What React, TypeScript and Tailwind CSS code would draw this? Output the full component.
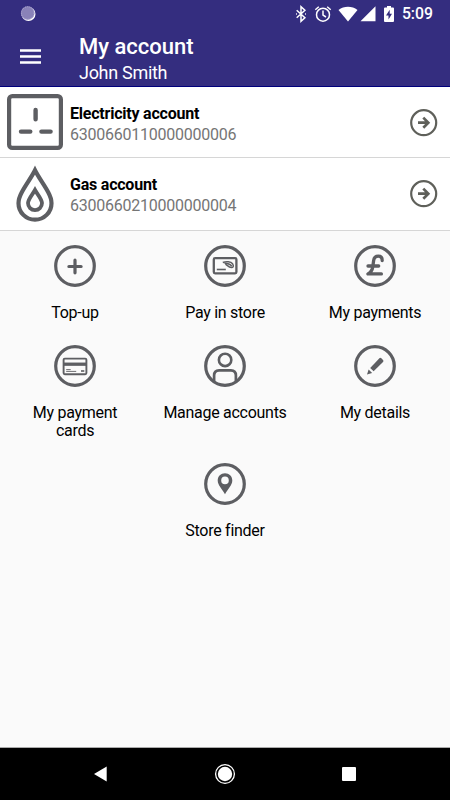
import type { ReactNode } from "react";

type Account = {
  name: string;
  number: string;
  icon: ReactNode;
};

type MenuItem = {
  label: string;
  icon: ReactNode;
};

function SocketIcon() {
  return (
    <svg viewBox="0 0 56 56" className="h-14 w-14" fill="none" stroke="currentColor">
      <rect x="2.1" y="2.1" width="51.8" height="51.8" rx="3.2" strokeWidth="4.2" />
      <path d="M28.6 16v9.2M14 37.6h9.3M34.4 37.6h9.2" strokeWidth="4.4" strokeLinecap="round" />
    </svg>
  );
}

function FlameIcon() {
  return (
    <svg viewBox="0 -0.8 56 56" className="h-14 w-14 overflow-visible" fill="none" stroke="currentColor" strokeWidth="4.2">
      <path d="M28 4.5C24.500 11.500 18.500 19.500 14.800 26.500 12.500 30.800 11.500 34 11.500 37.400a16.500 16.500 0 0 0 33 0C44.500 34 43.500 30.800 41.200 26.500 37.500 19.500 31.500 11.500 28 4.500Z" />
      <path d="M28 24.200C26 28 21 33.500 21 37.300a7 7 0 0 0 14 0C35 33.500 30 28 28 24.200Z" strokeWidth="3.8" />
    </svg>
  );
}

function ArrowIcon() {
  return (
    <svg viewBox="0 0 28 28" className="mt-[15px] h-7 w-7 text-[#5f605a]" fill="none" stroke="currentColor">
      <circle cx="13.7" cy="13.7" r="12.5" strokeWidth="2.2" />
      <path d="M8 13.700h10M13.300 8.600l5 5.100-5 5.100" strokeWidth="2.7" />
    </svg>
  );
}

// Shared ring used by every menu entry
function Ring({ children }: { children: ReactNode }) {
  return (
    <svg viewBox="0 0 42 42" className="h-[42px] w-[42px] text-[#5d5e62]" fill="none" stroke="currentColor">
      <circle cx="21" cy="21" r="19.3" strokeWidth="3.2" />
      {children}
    </svg>
  );
}

const accounts: Account[] = [
  { name: "Electricity account", number: "6300660110000000006", icon: <SocketIcon /> },
  { name: "Gas account", number: "6300660210000000004", icon: <FlameIcon /> },
];

const menuItems: MenuItem[] = [
  {
    label: "Top-up",
    icon: <path d="M21 15.200v12.600M14.900 21.500h12.200" strokeWidth="3.2" strokeLinecap="round" />,
  },
  {
    label: "Pay in store",
    icon: (
      <>
        <rect x="9.8" y="13.2" width="22.6" height="15.2" rx="1.3" strokeWidth="2.3" />
        <path d="M12.800 24.500h9" strokeWidth="1.6" />
        <path d="M18.800 17.500c3.500-1.500 8-1 9.800 1.300 1.300 2 .8 3.700-1.200 3.700-2.700-.2-4.300-2.500-6-3.400" strokeWidth="1.5" />
        <path d="M20.500 18.300c3 0 5.500.7 7.300 3" strokeWidth="1.6" />
      </>
    ),
  },
  {
    label: "My payments",
    icon: (
      <path
        d="M28.200 15.500c0-2.700-1.500-4.300-3.900-4.300-2.700 0-4.300 1.600-4.700 4.500l-.8 6c-.5 3.500-1.700 5.600-4.900 7.200h13.500M14 21h10.700"
        strokeWidth="3.3"
        strokeLinecap="round"
        strokeLinejoin="round"
      />
    ),
  },
  {
    label: "My payment cards",
    icon: (
      <>
        <rect x="9.6" y="13.6" width="22.8" height="15.6" rx="1.2" strokeWidth="1.9" />
        <path d="M9 19.200h24" strokeWidth="3.3" />
        <path d="M12.200 24.600h4.500M12.200 26.400h10" strokeWidth="0.9" />
        <path d="M27 26h3.300" strokeWidth="1.6" />
      </>
    ),
  },
  {
    label: "Manage accounts",
    icon: (
      <>
        <circle cx="21.1" cy="14.9" r="6.2" strokeWidth="2.6" />
        <path d="M10.100 37v-6.500c0-3.300 2-5.200 5-5.200h11.800c3 0 5 1.900 5 5.200V37" strokeWidth="2.7" />
      </>
    ),
  },
  {
    label: "My details",
    icon: (
      <g fill="currentColor" stroke="none">
        <path d="m16.200 23 9.200-9.700q1-1 2 0l1.600 1.600q1 1 0 2L19.600 26.200Z" />
        <path d="m14.600 24.500 3.500 3.400-5.100 1.600Z" />
      </g>
    ),
  },
  {
    label: "Store finder",
    icon: (
      <path
        d="M21 10.300c-4.100 0-7.300 3.100-7.300 7.100 0 4.600 4.300 8.100 7.300 13.900 3-5.800 7.300-9.300 7.300-13.900 0-4-3.200-7.100-7.300-7.100Zm0 3.300a3.800 3.800 0 1 1 0 7.600 3.800 3.800 0 0 1 0-7.600Z"
        fill="currentColor"
        fillRule="evenodd"
        stroke="none"
      />
    ),
  },
];

function StatusBar() {
  return (
    <div className="flex h-[27px] items-center justify-between pr-[17px] pl-5 text-white">
      <svg viewBox="0 0 16 16" className="h-4 w-4">
        <circle cx="8.5" cy="8" r="7" fill="#fff" />
        <circle cx="7.7" cy="7" r="6.8" fill="#8982b8" />
        <circle cx="7.7" cy="7" r="6.3" fill="none" stroke="#b6b0d6" strokeDasharray="1 1" />
      </svg>
      <div className="flex items-center">
        <svg viewBox="0 0 12 18" className="h-[18px] w-3" fill="none" stroke="currentColor" strokeWidth="1.5">
          <path d="m1.700 5.300 8.200 7.400L6 16.300V1.700l3.900 3.600-8.200 7.400M1 9h.9M10.100 9h.9" />
        </svg>
        <svg viewBox="0 0 18 18" className="ml-[7px] h-[18px] w-[18px]" fill="none" stroke="currentColor" strokeWidth="1.5">
          <circle cx="9" cy="9.7" r="6.5" />
          <path d="M9 5.500v4.600l3 1.900M1.300 4.800l3.500-3M16.700 4.800l-3.500-3" />
        </svg>
        <svg viewBox="0 0 20 16" className="ml-1.5 h-4 w-5" fill="currentColor">
          <path d="M.5 4C6-.2 14-.2 19.500 4L10 15.500Z" />
        </svg>
        <svg viewBox="0 0 16 16" className="ml-0.5 h-4 w-4" fill="currentColor">
          <path d="M15.500.300v15H.5Z" />
        </svg>
        <svg viewBox="0 0 10 16" className="ml-2 h-4 w-2.5" fill="currentColor">
          <path d="M3 0h4v1.500h2q1 0 1 1V15q0 1-1 1H1q-1 0-1-1V2.500q0-1 1-1h2Z" />
          <path d="M5.700 3.700 2 9.500h2.500v4L8 7.700H5.700Z" fill="#342d7f" />
        </svg>
        <span className="ml-2 text-[15.8px] leading-5 font-medium">5:09</span>
      </div>
    </div>
  );
}

function Header() {
  return (
    <header className="h-[87px] border-b border-[#00007c] bg-[#342d7f] text-white">
      <StatusBar />
      <div className="flex pl-5">
        <button aria-label="Menu" className="mt-[22px] h-4 w-[21px]">
          <svg viewBox="0 0 21 16" className="h-4 w-[21px]" stroke="currentColor" strokeWidth="2.4">
            <path d="M0 1.500h21M0 7.500h21M0 13.500h21" />
          </svg>
        </button>
        <div className="ml-[38px] pt-1.5">
          <h1 className="text-[22px] leading-7 font-medium">My account</h1>
          <p className="text-[18px] leading-6 tracking-[-0.3px]">John Smith</p>
        </div>
      </div>
    </header>
  );
}

function AccountRow({ account }: { account: Account }) {
  return (
    <li className="flex h-[71px] items-start border-b border-[#d6d6d6] bg-white pt-[7px] pr-3 pl-[7px] last:h-[73px]">
      <span className="text-[#5d5e62]">{account.icon}</span>
      <div className="mt-[9px] ml-[7px] flex-1">
        <h2 className="text-[16px] leading-[21px] font-bold tracking-[-0.22px] text-black">{account.name}</h2>
        <p className="text-[16px] leading-[21px] tracking-[-0.24px] text-[#757575]">{account.number}</p>
      </div>
      <ArrowIcon />
    </li>
  );
}

function NavBar() {
  return (
    <nav className="flex h-[53px] items-center justify-between border-t border-[#aaa] bg-black px-[94px] text-white">
      <svg viewBox="0 0 14 16" className="h-4 w-3.5" fill="currentColor">
        <path d="M12.700.500v15L0 8Z" />
      </svg>
      <svg viewBox="0 0 22 22" className="h-[22px] w-[22px]">
        <circle cx="11" cy="11" r="9.4" fill="none" stroke="currentColor" strokeWidth="1.3" />
        <circle cx="11" cy="11" r="7.2" fill="currentColor" />
      </svg>
      <span className="h-3.5 w-3.5 rounded-[1px] bg-white" />
    </nav>
  );
}

export default function App() {
  return (
    <div className="flex h-[800px] w-[450px] flex-col overflow-hidden bg-[#fafafa] font-['Roboto',sans-serif]">
      <Header />
      <ul>
        {accounts.map((account) => (
          <AccountRow key={account.number} account={account} />
        ))}
      </ul>
      <main className="flex flex-1 flex-wrap content-start justify-center gap-y-[23px] pt-3.5">
        {menuItems.map((item) => (
          <button key={item.label} className="flex w-[150px] flex-col items-center">
            <Ring>{item.icon}</Ring>
            <span className="mt-[17px] w-[124px] text-center text-[16px] leading-[18px] tracking-[-0.28px] text-black">
              {item.label}
            </span>
          </button>
        ))}
      </main>
      <NavBar />
    </div>
  );
}
